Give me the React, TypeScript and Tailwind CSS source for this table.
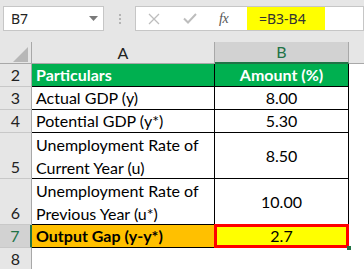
import React from "react";

const FONT = "font-['Lato','Noto_Sans',sans-serif]";

function RowHead({ n, h, sel }: { n: string; h: string; sel?: boolean }) {
  return (
    <div
      className={`${h} w-[32px] shrink-0 flex items-end justify-center pb-[1px] text-[16px] leading-[20px] border-b border-[#c8c8c8] ${
        sel
          ? "bg-[#d2d2d2] text-[#217346] border-r-2 border-r-[#217346]"
          : "bg-[#e6e6e6] text-[#222] border-r border-r-[#a8a8a8]"
      }`}
    >
      {n}
    </div>
  );
}

export default function App() {
  return (
    <div className={`w-[364px] h-[269px] overflow-hidden bg-[#e6e6e6] ${FONT}`}>
      {/* Toolbar */}
      <div className="h-[42px] flex items-start pt-[6px]">
        <div className="ml-[3px] w-[101px] h-[25px] shrink-0 bg-white border border-[#c6c6c6] flex items-center justify-between pl-[7px] pr-[5px]">
          <span className="text-[14px] text-[#222] font-['Noto_Sans',sans-serif]">B7</span>
          <svg width="9" height="5" viewBox="0 0 9 5">
            <path d="M0 0 H9 L4.5 5 Z" fill="#7a7a7a" />
          </svg>
        </div>
        <div className="w-[31px] h-[25px] shrink-0 flex flex-col items-center justify-center gap-[2px]">
          <div className="w-[2px] h-[2px] bg-[#b4b4b4]" />
          <div className="w-[2px] h-[2px] bg-[#b4b4b4]" />
          <div className="w-[2px] h-[2px] bg-[#b4b4b4]" />
        </div>
        <div className="flex-1 h-[25px] bg-white border border-[#c6c6c6] flex items-stretch">
          <div className="w-[111px] shrink-0 flex items-center">
            <svg className="ml-[12px]" width="12" height="12" viewBox="0 0 12 12">
              <path d="M1 1 L11 11 M11 1 L1 11" stroke="#bdbdbd" strokeWidth="1.3" />
            </svg>
            <svg className="ml-[23px]" width="14" height="11" viewBox="0 0 14 11">
              <path d="M1 5.5 L5 9.5 L13 1" stroke="#bdbdbd" strokeWidth="2" fill="none" />
            </svg>
            <span className="ml-[22px] text-[14px] italic text-[#555] font-['Liberation_Serif',serif] tracking-[-0.5px]">
              fx
            </span>
          </div>
          <div className="w-[78px] bg-[#ffff00] flex items-center pl-[12px] text-[14px] text-[#333] font-['Noto_Sans',sans-serif]">
            =B3-B4
          </div>
        </div>
      </div>

      {/* Column headers */}
      <div className="h-[22px] flex">
        <div className="w-[32px] shrink-0 relative bg-[#e6e6e6] border-r border-[#a8a8a8] border-b border-b-[#a8a8a8]">
          <svg className="absolute left-[13px] top-[5px]" width="15" height="15" viewBox="0 0 15 15">
            <path d="M15 0 V15 H0 Z" fill="#b7b7b7" />
          </svg>
        </div>
        <div className="w-[183px] shrink-0 bg-[#e6e6e6] border-r border-[#a8a8a8] border-b border-b-[#a8a8a8] flex items-center justify-center text-[16px] text-[#222]">
          A
        </div>
        <div className="w-[134px] shrink-0 bg-[#d2d2d2] border-r border-[#a8a8a8] border-b-2 border-b-[#217346] flex items-center justify-center text-[16px] text-[#217346]">
          B
        </div>
        <div className="flex-1 bg-[#e6e6e6] border-b border-[#a8a8a8]" />
      </div>

      {/* Row 2 */}
      <div className="flex h-[23px]">
        <RowHead n="2" h="h-[23px]" />
        <div className="w-[183px] shrink-0 bg-[#00b050] border-r border-b border-black flex items-center pl-[4px] text-[16px] font-bold text-white">
          Particulars
        </div>
        <div className="w-[134px] shrink-0 bg-[#00b050] border-r border-b border-black flex items-center justify-center text-[16px] font-bold text-white">
          Amount (%)
        </div>
        <div className="flex-1 bg-white" />
      </div>

      {[
        ["3", "Actual GDP (y)", "8.00"],
        ["4", "Potential GDP (y*)", "5.30"],
      ].map(([n, a, b]) => (
        <div key={n} className="flex h-[23px]">
          <RowHead n={n} h="h-[23px]" />
          <div className="w-[183px] shrink-0 bg-white border-r border-b border-black flex items-center pl-[4px] text-[16px] text-black">
            {a}
          </div>
          <div className="w-[134px] shrink-0 bg-white border-r border-b border-black flex items-center justify-center text-[16px] text-black">
            {b}
          </div>
          <div className="flex-1 bg-white" />
        </div>
      ))}

      {[
        ["5", "Current Year (u)", "8.50"],
        ["6", "Previous Year (u*)", "10.00"],
      ].map(([n, a, b]) => (
        <div key={n} className="flex h-[46px]">
          <RowHead n={n} h="h-[46px]" />
          <div className="w-[183px] shrink-0 bg-white border-r border-b border-black flex flex-col justify-center pl-[4px] text-[16px] leading-[23px] text-black">
            <span>Unemployment Rate of</span>
            <span>{a}</span>
          </div>
          <div className="w-[134px] shrink-0 bg-white border-r border-b border-black flex items-center justify-center text-[16px] text-black">
            {b}
          </div>
          <div className="flex-1 bg-white" />
        </div>
      ))}

      {/* Row 7 */}
      <div className="flex h-[23px]">
        <RowHead n="7" h="h-[23px]" sel />
        <div className="w-[183px] shrink-0 bg-[#ffc000] border-r border-b border-black flex items-center pl-[4px] text-[16px] font-bold text-black">
          Output Gap (y-y*)
        </div>
        <div className="w-[134px] shrink-0 relative bg-[#ffff00] border-r border-b border-black flex items-center justify-center text-[16px] text-black">
          2.7
          <div className="absolute -left-[1px] -top-[1px] -right-[1px] -bottom-[1px] border-[3px] border-[#ff0000]" />
          <div className="absolute -right-[3px] -bottom-[3px] w-[4px] h-[4px] bg-[#217346]" />
        </div>
        <div className="flex-1 bg-white" />
      </div>

      {/* Row 8 */}
      <div className="flex h-[23px]">
        <RowHead n="8" h="h-[23px]" />
        <div className="flex-1 bg-white" />
      </div>
    </div>
  );
}
